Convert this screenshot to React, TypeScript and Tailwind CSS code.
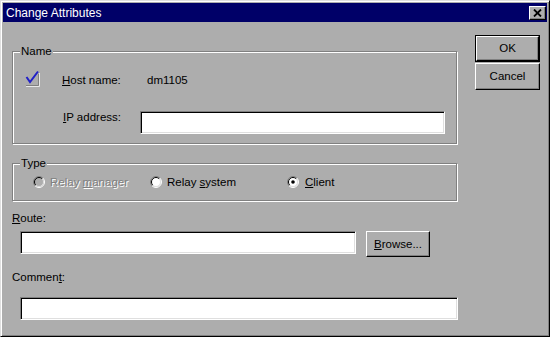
import React from 'react';

const font = { fontFamily: '"Liberation Sans", Arial, sans-serif' };

const raised =
  'border border-t-white border-l-white border-r-black border-b-black shadow-[inset_-1px_-1px_0_#808080] bg-[#adadad]';
const sunken =
  'border border-t-[#808080] border-l-[#808080] border-r-white border-b-white shadow-[inset_1px_1px_0_#000,inset_-1px_-1px_0_#dfdfdf] bg-white';

const U: React.FC<{ children: React.ReactNode }> = ({ children }) => (
  <span className="underline underline-offset-[1px]">{children}</span>
);

const Group: React.FC<{ label: string; className: string; children: React.ReactNode }> = ({
  label,
  className,
  children,
}) => (
  <div className={`relative border border-[#808080] shadow-[inset_1px_1px_0_#fff,1px_1px_0_#fff] ${className}`}>
    <span className="absolute -top-[9px] left-[7px] px-[1px] bg-[#adadad] leading-4">{label}</span>
    {children}
  </div>
);

const Radio: React.FC<{ checked?: boolean; disabled?: boolean }> = ({ checked, disabled }) => (
  <svg width="12" height="12" viewBox="0 0 12 12" className="shrink-0">
    <circle cx="6" cy="6" r="5" fill={disabled ? '#adadad' : '#fff'} />
    <path d="M2.1 9.9 A5.5 5.5 0 0 1 9.9 2.1" stroke="#808080" fill="none" />
    <path d="M9.9 2.1 A5.5 5.5 0 0 1 2.1 9.9" stroke="#fff" fill="none" />
    <path d="M2.8 9.2 A4.5 4.5 0 0 1 9.2 2.8" stroke="#000" fill="none" />
    <path d="M9.2 2.8 A4.5 4.5 0 0 1 2.8 9.2" stroke="#dfdfdf" fill="none" />
    {checked && <circle cx="6" cy="6" r="1.8" fill="#000" />}
  </svg>
);

export default function App() {
  return (
    <div
      className="w-[550px] h-[337px] bg-[#adadad] text-black text-[11.5px] border border-t-[#dfdfdf] border-l-[#dfdfdf] border-r-black border-b-black shadow-[inset_1px_1px_0_#fff,inset_-1px_-1px_0_#808080] p-[2px]"
      style={font}
    >
      {/* title bar */}
      <div className="h-[19px] bg-[#000068] flex items-center justify-between">
        <span className="pl-[3px] text-white text-[12px] leading-none">Change Attributes</span>
        <button className={`mr-[1px] w-[17px] h-[14px] flex items-center justify-center ${raised}`}>
          <svg width="9" height="8" viewBox="0 0 9 8">
            <path d="M1 0.5 L8 7.5 M8 0.5 L1 7.5" stroke="#000" strokeWidth="1.8" />
          </svg>
        </button>
      </div>

      <div className="flex pl-[9px]">
        {/* left column */}
        <div className="w-[446px] flex flex-col">
          <Group label="Name" className="mt-[29px] w-[445px] h-[93px]">
            <div className="flex items-start pt-[20px] leading-4">
              <svg width="16" height="18" viewBox="0 0 16 18" className="ml-[12px] -mt-[3px] shrink-0">
                <path d="M13.5 5 V16.5 H1" stroke="#808080" fill="none" />
                <path d="M14.5 4 V17.5 H1" stroke="#e8e8e8" fill="none" />
                <path d="M1.5 8 L5 13 L13 2.5" stroke="#2020c8" strokeWidth="2" fill="none" />
              </svg>
              <span className="ml-[21px] w-[85px]">
                <U>H</U>ost name:
              </span>
              <span>dm1105</span>
            </div>
            <div className="flex items-start mt-[21px] leading-4">
              <span className="ml-[50px] w-[77px]">
                <U>I</U>P address:
              </span>
              <div className={`mt-[2px] w-[305px] h-[23px] ${sunken}`} />
            </div>
          </Group>

          <Group label="Type" className="mt-[19px] w-[445px] h-[38px]">
            <div className="flex items-center pt-[10px] leading-4 pl-[20px]">
              <div className="flex items-center gap-[5px] w-[117px]">
                <Radio disabled />
                <span className="text-[#808080] [text-shadow:1px_1px_0_#fff]">
                  Relay <U>m</U>anager
                </span>
              </div>
              <div className="flex items-center gap-[5px] w-[137px]">
                <Radio />
                <span>
                  Relay <U>s</U>ystem
                </span>
              </div>
              <div className="flex items-center gap-[6px]">
                <Radio checked />
                <span>
                  <U>C</U>lient
                </span>
              </div>
            </div>
          </Group>

          <span className="mt-[9px] leading-4">
            <U>R</U>oute:
          </span>
          <div className="mt-[5px] flex items-start ml-[8px]">
            <div className={`mt-0 w-[336px] h-[23px] ${sunken}`} />
            <button className={`ml-[10px] w-[64px] h-[26px] leading-4 ${raised}`}>
              <U>B</U>rowse...
            </button>
          </div>

          <span className="mt-[12px] leading-4">
            Commen<U>t</U>:
          </span>
          <div className={`mt-[12px] ml-[8px] w-[438px] h-[23px] ${sunken}`} />
        </div>

        {/* right column */}
        <div className="ml-[17px] mt-[13px] flex flex-col">
          <div className="border border-black">
            <button className={`w-[63px] h-[25px] ${raised}`}>OK</button>
          </div>
          <button className={`mt-[1px] w-[65px] h-[27px] ${raised}`}>Cancel</button>
        </div>
      </div>
    </div>
  );
}
